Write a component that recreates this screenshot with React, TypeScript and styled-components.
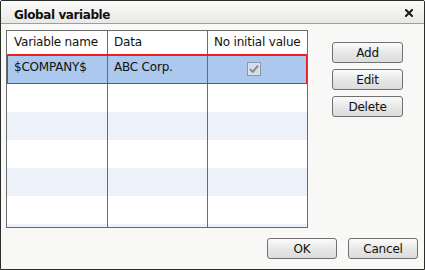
import React from 'react';
import styled, {createGlobalStyle} from 'styled-components';

const GlobalStyle = createGlobalStyle`
  html, body {
    margin: 0;
    padding: 0;
    background: #ffffff;
  }
  body {
    font-family: 'DejaVu Sans', 'Liberation Sans', sans-serif;
  }
`;

const Window = styled.div`
  width: 425px;
  height: 270px;
  box-sizing: border-box;
  border: 1px solid #2b2d2b;
  border-radius: 2px 2px 0 0;
  background: #f8f9f6;
  display: flex;
  flex-direction: column;
  overflow: hidden;
`;

const TitleBar = styled.div`
  height: 22px;
  box-sizing: content-box;
  border-bottom: 1px solid #9c9e9c;
  background: linear-gradient(#fbfbf9, #e8e9e6);
  display: flex;
  justify-content: space-between;
  align-items: flex-start;
  padding: 0 11px 0 13px;
`;

const Title = styled.span`
  margin-top: 7px;
  font-size: 12px;
  line-height: 14px;
  font-weight: bold;
  letter-spacing: -0.4px;
  color: #111;
`;

const CloseButton = styled.span`
  margin-top: 8px;
  width: 8px;
  height: 8px;
  display: flex;
`;

const Body = styled.div`
  flex: 1;
  display: flex;
  flex-direction: column;
  padding: 6px 6px 10px 5px;
`;

const Main = styled.div`
  display: flex;
  align-items: flex-start;
  gap: 24px;
`;

const Grid = styled.div`
  width: 302px;
  height: 198px;
  box-sizing: border-box;
  border: 1px solid #6b6b6b;
  background: #fff;
  overflow: hidden;
`;

const Row = styled.div<{variant: 'head' | 'plain' | 'alt' | 'selected'}>`
  position: relative;
  display: grid;
  grid-template-columns: 101px 100px 99px;
  height: ${p => (p.variant === 'head' ? '24px' : '28px')};
  background: ${p =>
    p.variant === 'selected' ? '#abc8ee' : p.variant === 'alt' ? '#edf2fa' : '#ffffff'};
  ${p => p.variant === 'head' && 'border-bottom: 1px solid #6b6b6b;'}
  ${p =>
    p.variant === 'selected' &&
    `
    &::after {
      content: '';
      position: absolute;
      top: -2px;
      bottom: -1px;
      left: -1px;
      right: -1px;
      border: 2px solid #ec1c24;
      border-radius: 2px;
      pointer-events: none;
    }
  `}
`;

const Cell = styled.div<{center?: boolean}>`
  box-sizing: border-box;
  padding: 4px 0 0 6px;
  border-right: 1px solid #6b6b6b;
  font-size: 12px;
  line-height: 14px;
  letter-spacing: -0.2px;
  color: #111;
  white-space: nowrap;
  overflow: hidden;
  &:first-child {
    padding-left: 7px;
  }
  &:last-child {
    border-right: none;
  }
  ${p =>
    p.center &&
    `
    display: flex;
    justify-content: center;
    padding: 6px 8px 0 0;
  `}
`;

const SideButtons = styled.div`
  margin-top: 12px;
  display: flex;
  flex-direction: column;
  gap: 6px;
`;

const Button = styled.button<{narrow?: boolean}>`
  width: ${p => (p.narrow ? '70px' : '71px')};
  height: 21px;
  box-sizing: border-box;
  padding: 0;
  border: 1px solid #707070;
  border-radius: 3px;
  background: linear-gradient(#fbfbfb, #e6e6e6 55%, #dcdcdc);
  font-family: 'DejaVu Sans', 'Liberation Sans', sans-serif;
  font-size: 12px;
  letter-spacing: -0.2px;
  color: #111;
  line-height: 14px;
`;

const Footer = styled.div`
  margin-top: auto;
  display: flex;
  justify-content: flex-end;
  gap: 11px;
`;

function Checkbox() {
  return (
    <svg width="14" height="14" viewBox="0 0 14 14">
      <rect x="0.5" y="0.5" width="13" height="13" fill="#dfe5ee" stroke="#8d98a6" />
      <rect x="1.5" y="1.5" width="11" height="11" fill="#d4dbe6" />
      <path d="M3 7.2 L5.8 10 L11 3.6" fill="none" stroke="#7c8594" strokeWidth="1.8" />
    </svg>
  );
}

function CloseIcon() {
  return (
    <svg width="8" height="8" viewBox="0 0 8 8">
      <path d="M1 1 L7 7 M7 1 L1 7" stroke="#1a1a1a" strokeWidth="2" strokeLinecap="square" />
    </svg>
  );
}

const emptyRows: Array<'plain' | 'alt'> = ['plain', 'alt', 'plain', 'alt', 'plain', 'alt'];

export default function App() {
  return (
    <>
      <GlobalStyle />
      <Window>
        <TitleBar>
          <Title>Global variable</Title>
          <CloseButton>
            <CloseIcon />
          </CloseButton>
        </TitleBar>
        <Body>
          <Main>
            <Grid>
              <Row variant="head">
                <Cell>Variable name</Cell>
                <Cell>Data</Cell>
                <Cell>No initial value</Cell>
              </Row>
              <Row variant="selected">
                <Cell>$COMPANY$</Cell>
                <Cell>ABC Corp.</Cell>
                <Cell center>
                  <Checkbox />
                </Cell>
              </Row>
              {emptyRows.map((v, i) => (
                <Row key={i} variant={v}>
                  <Cell />
                  <Cell />
                  <Cell />
                </Row>
              ))}
            </Grid>
            <SideButtons>
              <Button>Add</Button>
              <Button>Edit</Button>
              <Button>Delete</Button>
            </SideButtons>
          </Main>
          <Footer>
            <Button narrow>OK</Button>
            <Button narrow>Cancel</Button>
          </Footer>
        </Body>
      </Window>
    </>
  );
}
